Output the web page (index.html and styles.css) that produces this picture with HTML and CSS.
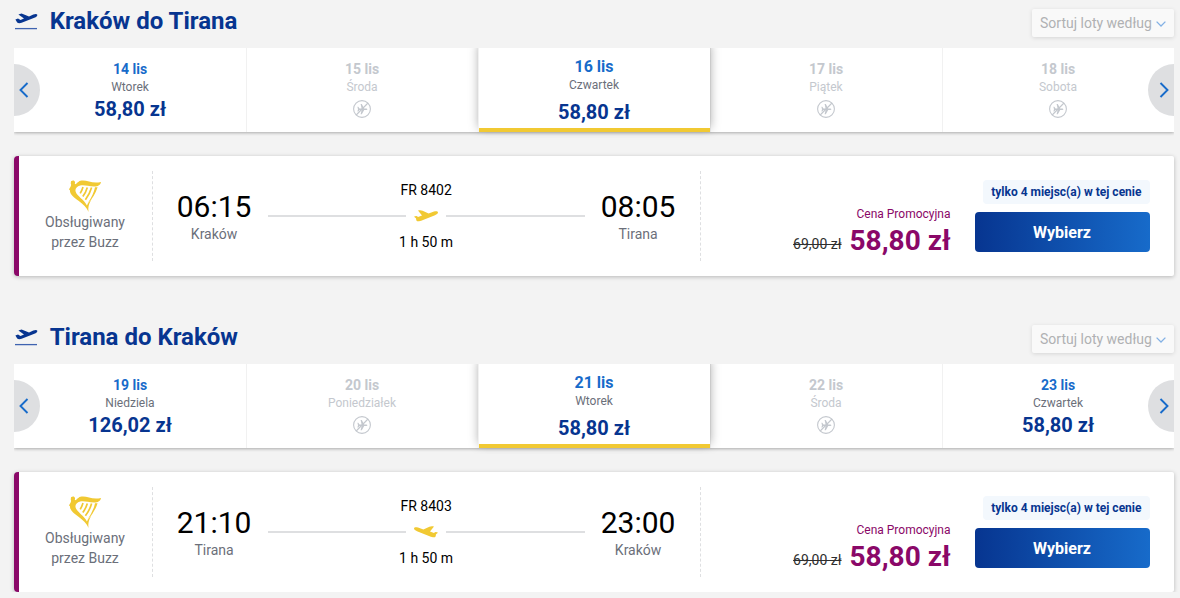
FILE: index.html
```html
<!DOCTYPE html>
<html lang="pl">
<head>
    <meta charset="UTF-8">
    <meta name="viewport" content="width=device-width, initial-scale=1.0">
    <title>Wybierz loty</title>
    <link rel="stylesheet" href="styles.css">
</head>
<body>
    <svg class="sprite">
        <symbol id="departure" viewBox="0 0 24 20">
            <path d="M1.4 7.4L4 6.5L6.5 8L10 6.6L4.4 2.4L7.6 1.4L15 4.6L19.3 2.6C21 1.9 23 1.9 23.3 2.7C23.6 3.8 22.5 4.8 21 5.4L7.6 10.8C6 11.4 4 11.4 3.2 10.4Z" fill="currentColor"/>
            <path d="M1 16.6H23" stroke="#3f63b0" stroke-width="1.3"/>
        </symbol>
        <symbol id="plane" viewBox="0 0 24 12">
            <path d="M0 6.8C1.4 5.9 3 5.8 4 7L8 5.6L4 .6C5.6-.1 7.2 0 8.6 .8L14.6 3.4L20 1.6C22 1 24 1.2 24 2.6C24 3.9 22.6 4.6 21 5.2L8.4 10.3C5.8 11.3 3.4 11.8 2.6 10.8C1.9 9.8 2.4 9 1.9 8.3C1.5 7.7 .6 7.4 0 6.8Z" fill="currentColor"/>
        </symbol>
        <symbol id="harp" viewBox="0 0 32 32">
            <path d="M2 1.3C3.6 .2 5.8 .4 6 2.2C6.1 3.3 5.6 3.8 6 4.2C8.4 3.6 9.2 .8 12.6 .5C18.5 -.2 23 4 32 1.9C31.6 4.8 28.8 6.6 25 6.5C19 6.4 15 4.4 11.2 5.6C7.6 6.8 5.9 8.6 6.6 11.5C7.8 16 15 19.5 17.9 25.4C19 23 20.6 21.5 22.6 19C20.4 23 19.8 25 19.5 27C19.2 29 19.3 30.5 19.6 32C17.5 27.5 14.5 24.5 9.5 20.8C4.6 17 .8 14.5 .9 10L0 9.7C.6 7.7 2.2 6.5 2.1 4.6C1.4 3.5 2 2.5 2 1.3Z" fill="currentColor"/>
            <path d="M14 7Q13 10.4 11.2 13.4M18.3 7.4Q16.8 12.4 13.8 16.6M22.6 7.6Q20.8 14 16.4 19.8" fill="none" stroke="currentColor" stroke-width="1.7"/>
            <path d="M26 7.2Q24.6 14.5 18.4 23.8Q25.2 17.4 28.6 7.2Z" fill="currentColor"/>
        </symbol>
        <symbol id="no-flight" viewBox="0 0 18 18">
            <circle cx="9" cy="9" r="8.4" fill="none" stroke="currentColor" stroke-width="1.1"/>
            <path d="M4.4 6.8H5.3L6.5 8.4H8.6L7.6 4H8.8L11.2 8.4H13C13.8 8.4 14.4 8.7 14.4 9.2S13.8 10 13 10H11.2L8.8 14.2H7.6L8.6 10H6.5L5.3 11.4H4.4L5 9.2Z" fill="currentColor"/>
            <path d="M3.2 15L15 3" stroke="currentColor" stroke-width="1.1"/>
        </symbol>
        <symbol id="chevron" viewBox="0 0 10 16">
            <path d="M8.5 1L1.5 8L8.5 15" fill="none" stroke="currentColor" stroke-width="1.9"/>
        </symbol>
    </svg>

    <section class="journey">
        <header class="journey-header">
            <svg class="icon-departure"><use href="#departure"/></svg>
            <h3>Kraków do Tirana</h3>
            <button class="sort">Sortuj loty według<svg viewBox="0 0 10 6"><path d="M.6 .6L5 5L9.4 .6"/></svg></button>
        </header>
        <div class="carousel">
            <button class="arrow prev"><svg><use href="#chevron"/></svg></button>
            <ul class="dates">
                <li class="date"><b>14 lis</b><span>Wtorek</span><strong>58,80 zł</strong></li>
                <li class="date disabled"><b>15 lis</b><span>Środa</span><svg><use href="#no-flight"/></svg></li>
                <li class="date selected"><b>16 lis</b><span>Czwartek</span><strong>58,80 zł</strong></li>
                <li class="date disabled"><b>17 lis</b><span>Piątek</span><svg><use href="#no-flight"/></svg></li>
                <li class="date disabled"><b>18 lis</b><span>Sobota</span><svg><use href="#no-flight"/></svg></li>
            </ul>
            <button class="arrow next"><svg><use href="#chevron"/></svg></button>
        </div>
        <div class="flight">
            <div class="operator">
                <svg><use href="#harp"/></svg>
                <p>Obsługiwany<br>przez Buzz</p>
            </div>
            <div class="route">
                <div class="stop"><time>06:15</time><span>Kraków</span></div>
                <div class="duration">
                    <span>FR 8402</span>
                    <div class="line"><svg><use href="#plane"/></svg></div>
                    <span>1 h 50 m</span>
                </div>
                <div class="stop"><time>08:05</time><span>Tirana</span></div>
            </div>
            <div class="price">
                <span class="promo">Cena Promocyjna</span>
                <div class="amount"><del>69,00 zł</del><strong>58,80 zł</strong></div>
            </div>
            <div class="action">
                <span class="seats">tylko 4 miejsc(a) w tej cenie</span>
                <button class="select">Wybierz</button>
            </div>
        </div>
    </section>

    <section class="journey">
        <header class="journey-header">
            <svg class="icon-departure"><use href="#departure"/></svg>
            <h3>Tirana do Kraków</h3>
            <button class="sort">Sortuj loty według<svg viewBox="0 0 10 6"><path d="M.6 .6L5 5L9.4 .6"/></svg></button>
        </header>
        <div class="carousel">
            <button class="arrow prev"><svg><use href="#chevron"/></svg></button>
            <ul class="dates">
                <li class="date"><b>19 lis</b><span>Niedziela</span><strong>126,02 zł</strong></li>
                <li class="date disabled"><b>20 lis</b><span>Poniedziałek</span><svg><use href="#no-flight"/></svg></li>
                <li class="date selected"><b>21 lis</b><span>Wtorek</span><strong>58,80 zł</strong></li>
                <li class="date disabled"><b>22 lis</b><span>Środa</span><svg><use href="#no-flight"/></svg></li>
                <li class="date"><b>23 lis</b><span>Czwartek</span><strong>58,80 zł</strong></li>
            </ul>
            <button class="arrow next"><svg><use href="#chevron"/></svg></button>
        </div>
        <div class="flight">
            <div class="operator">
                <svg><use href="#harp"/></svg>
                <p>Obsługiwany<br>przez Buzz</p>
            </div>
            <div class="route">
                <div class="stop"><time>21:10</time><span>Tirana</span></div>
                <div class="duration">
                    <span>FR 8403</span>
                    <div class="line inbound"><svg><use href="#plane"/></svg></div>
                    <span>1 h 50 m</span>
                </div>
                <div class="stop"><time>23:00</time><span>Kraków</span></div>
            </div>
            <div class="price">
                <span class="promo">Cena Promocyjna</span>
                <div class="amount"><del>69,00 zł</del><strong>58,80 zł</strong></div>
            </div>
            <div class="action">
                <span class="seats">tylko 4 miejsc(a) w tej cenie</span>
                <button class="select">Wybierz</button>
            </div>
        </div>
    </section>
</body>
</html>
```
FILE: styles.css
```css
* {
    margin: 0;
    padding: 0;
    box-sizing: border-box;
}

body {
    padding: 0 6px 0 14px;
    font-family: Roboto, "Liberation Sans", sans-serif;
    font-size: 14px;
    line-height: 20px;
    color: #000;
    background-color: #f3f3f3;
}

button {
    border: none;
    font-family: inherit;
    cursor: pointer;
}

.sprite {
    display: none;
}

.journey + .journey {
    margin-top: 40px;
}

.journey-header {
    display: flex;
    height: 48px;
    color: #073590;
}

.icon-departure {
    margin-top: 12px;
    width: 24px;
    height: 20px;
}

.journey-header h3 {
    margin: 5px auto 0 11.7px;
    font-size: 24px;
    font-weight: bold;
    line-height: 32px;
}

.sort {
    display: flex;
    align-items: center;
    margin-top: 9px;
    padding: 0 8px;
    width: 142px;
    height: 28px;
    font-size: 14px;
    color: #b0b1b3;
    background-color: #f9f9f9;
    border-radius: 2px;
    box-shadow: 0 1px 4px rgba(0, 0, 0, .12);
    white-space: nowrap;
}

.sort svg {
    flex: none;
    margin: 2px 0 0 4px;
    width: 10px;
    height: 6px;
    fill: none;
    stroke: #83b1e5;
    stroke-width: 1.3;
}

/* date carousel */
.carousel {
    position: relative;
    height: 84px;
    background-color: #fff;
    box-shadow: 0 1px 3px rgba(0, 0, 0, .3);
    clip-path: inset(0 0 -6px 0);
}

.dates {
    display: grid;
    grid-template-columns: repeat(5, 1fr);
    height: 84px;
    list-style: none;
}

.date {
    display: flex;
    flex-direction: column;
    align-items: center;
    padding: 11px 1px 0 0;
    border-left: 1px solid #f1f1f1;
}

.date:first-child {
    padding-right: 0;
    border-left: none;
}

.date b {
    font-size: 14px;
    line-height: 20px;
    color: #176bca;
}

.date span {
    font-size: 12px;
    line-height: 16px;
    color: #6b6f7a;
}

.date strong {
    font-size: 20px;
    line-height: 28px;
    color: #073590;
}

.date svg {
    margin-top: 5px;
    width: 18px;
    height: 18px;
}

.date.disabled,
.date.disabled b,
.date.disabled span {
    color: #c4c8ce;
}

.date.selected {
    z-index: 1;
    margin-left: 1px;
    padding-top: 7px;
    border-left: none;
    border-bottom: 4px solid #f1c933;
    background-color: #fff;
    box-shadow: -1px 0 #f1f1f1, 0 -4px 10px rgba(0, 0, 0, .35);
}

.date.selected b {
    font-size: 16px;
    line-height: 24px;
}

.date.selected span {
    line-height: 12px;
}

.date.selected strong {
    margin-top: 7px;
}

.arrow {
    position: absolute;
    top: 16px;
    z-index: 2;
    width: 26px;
    height: 52px;
    color: #176bca;
    background-color: #dedfe1;
}

.arrow svg {
    display: block;
    width: 10px;
    height: 16px;
}

.prev {
    left: 0;
    padding-left: 5px;
    border-radius: 0 26px 26px 0;
}

.next {
    right: 0;
    padding-left: 11px;
    border-radius: 26px 0 0 26px;
}

.next svg {
    transform: scaleX(-1);
}

/* flight card */
.flight {
    display: flex;
    margin-top: 24px;
    height: 120px;
    background-color: #fff;
    border-left: 5px solid #8a0868;
    border-radius: 4px 2px 2px 4px;
    box-shadow: 0 1px 4px rgba(0, 0, 0, .25);
}

.operator {
    margin: 15px 0;
    padding: 9px 1px 0 0;
    width: 134px;
    height: 90px;
    text-align: center;
    color: #6b6f7a;
    border-right: 1px dashed #dedfe1;
}

.operator svg {
    display: block;
    margin: 0 auto;
    width: 32px;
    height: 32px;
    color: #f1c933;
}

.route {
    display: flex;
    margin: 15px 0;
    padding: 0 24.4px 0 23.6px;
    width: 548px;
    border-right: 1px dashed #dedfe1;
}

.stop {
    display: flex;
    flex-direction: column;
    align-items: center;
    padding-top: 18px;
    width: 75px;
    color: #6b6f7a;
}

.stop time {
    margin-bottom: -1px;
    font-size: 30px;
    line-height: 36px;
    color: #000;
}

.duration {
    flex: 1;
    margin: 0 16px;
    padding-top: 9px;
    text-align: center;
}

.duration span {
    display: block;
}

.line {
    display: flex;
    align-items: center;
    gap: 8px;
    height: 32px;
}

.line::before,
.line::after {
    content: "";
    flex: 1;
    height: 2px;
    background-color: #dedfe1;
}

.line svg {
    width: 24px;
    height: 12px;
    color: #f1c933;
}

.inbound svg {
    transform: scaleX(-1);
}

.price {
    display: flex;
    flex: 1;
    flex-direction: column;
    align-items: flex-end;
    padding: 50px 24.5px 0 0;
    color: #8a0868;
}

.promo {
    font-size: 12px;
    line-height: 16px;
}

.amount {
    display: flex;
    align-items: center;
    gap: 8px;
    padding-top: 1px;
}

.amount del {
    padding-top: 5px;
    color: #2e2e2e;
}

.amount strong {
    font-size: 28px;
    line-height: 36px;
}

.action {
    display: flex;
    flex-direction: column;
    align-items: flex-end;
    padding: 24px 24px 0 0;
}

.seats {
    padding: 0 8.5px 0 8px;
    font-size: 12px;
    font-weight: bold;
    line-height: 24px;
    color: #073590;
    background-color: #f3f8fd;
    border-radius: 4px;
}

.select {
    margin-top: 8px;
    padding-right: 1px;
    width: 175px;
    height: 40px;
    font-size: 16px;
    font-weight: bold;
    color: #fff;
    background: linear-gradient(90deg, #073590, #176bca);
    border-radius: 4px;
}
```
